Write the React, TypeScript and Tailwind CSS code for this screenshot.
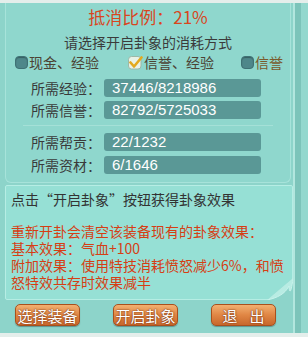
import React from "react";

const font = { fontFamily: '"Noto Sans CJK SC", "Noto Sans", sans-serif' };

function Radio() {
  return <span className="inline-block w-[13px] h-[13px] rounded-[4px] bg-[#4e878a] border border-[#3f7275] shadow-[inset_0_1px_1px_rgba(0,0,0,0.3)]" />;
}

function Checked() {
  return (
    <svg width="15" height="15" viewBox="0 0 15 15">
      <rect x="0.5" y="1.5" width="12.5" height="12.5" rx="3" fill="#e9f2e6" stroke="#9db8a8" />
      <path d="M2.5 7.5 L6 11.5 L13.5 2.5" fill="none" stroke="#e3a91e" strokeWidth="2.6" strokeLinecap="round" strokeLinejoin="round" />
    </svg>
  );
}

function Row({ label, value }: { label: string; value: string }) {
  return (
    <div className="flex items-center h-[18px]">
      <div className="w-[95px] text-right text-[14px] text-[#3a3a3a] leading-[18px]">{label}</div>
      <div className="ml-[3px] w-[157px] h-[18px] rounded-[3px] bg-[#5a9896] text-white text-[15px] leading-[18px] pl-[8px]" style={{ fontFamily: '"Liberation Sans", Arial, sans-serif' }}>
        {value}
      </div>
    </div>
  );
}

function Btn({ children }: { children: React.ReactNode }) {
  return (
    <div className="w-[65px] h-[22px] rounded-[5px] border border-[#a9501d] bg-gradient-to-b from-[#f2b070] via-[#e08644] to-[#c8682c] flex items-center justify-center gap-[12px] text-white text-[15px] leading-none [text-shadow:0_0_2px_#7a3410,0_0_1px_#7a3410] shadow-[0_1px_1px_rgba(0,0,0,0.3)]">
      {children}
    </div>
  );
}

export default function App() {
  return (
    <div className="w-[308px] h-[337px] bg-[#e4eeeb] pt-[3px] pb-[4px]" style={font}>
      <div className="flex h-[330px] bg-[#8dd4ca]">
        <div className="w-[293px] pl-[5px] flex flex-col">
          {/* Top panel */}
          <div className="w-[286px] h-[180px] bg-[#8fd7cd] border-x border-b border-[#a7e3da] rounded-b-[6px] flex flex-col items-center">
            <div className="mt-[3px] h-[22px] text-[17px] leading-[22px] text-[#d9461d]">抵消比例：21%</div>
            <div className="mt-[5px] h-[18px] text-[14px] leading-[18px] text-[#3b3b3b]">请选择开启卦象的消耗方式</div>
            <div className="mt-[2px] h-[18px] w-full flex items-center text-[14px] leading-[18px] text-[#4c4334]">
              <div className="ml-[9px] flex items-center gap-[1px]"><Radio /><span>现金、经验</span></div>
              <div className="ml-[29px] flex items-center gap-[1px]"><Checked /><span>信誉、经验</span></div>
              <div className="ml-[27px] flex items-center gap-[1px]"><Radio /><span className="text-[#7a5a2c]">信誉</span></div>
            </div>
            <div className="mt-[8px] w-full flex flex-col gap-[4px]">
              <Row label="所需经验：" value="37446/8218986" />
              <Row label="所需信誉：" value="82792/5725033" />
            </div>
            <div className="mt-[6px] w-[250px] h-px bg-[#a5e0d7]" />
            <div className="mt-[7px] w-full flex flex-col gap-[5px]">
              <Row label="所需帮贡：" value="22/1232" />
              <Row label="所需资材：" value="6/1646" />
            </div>
          </div>
          {/* Text box */}
          <div className="relative mt-[2px] w-[288px] h-[115px] bg-[#96e0d5] border border-[#b6ede4] rounded-[2px] px-[5px] pt-[5px]">
            <div className="text-[14px] leading-[17px] text-[#333333]">点击“开启卦象”按钮获得卦象效果</div>
            <div className="mt-[15px] text-[14px] leading-[17px] text-[#d63e14]">
              <div>重新开卦会清空该装备现有的卦象效果：</div>
              <div>基本效果：气血+100</div>
              <div>附加效果：使用特技消耗愤怒减少6%，和愤怒特效共存时效果减半</div>
            </div>
            <svg className="absolute right-[-1px] bottom-[-1px]" width="26" height="22" viewBox="0 0 26 22">
              <path d="M0 22 L26 0 L26 22 Z" fill="#8dd4ca" />
              <path d="M0 22 C10 20 18 16 22 8 C22 14 24 18 26 0" fill="#b8ece3" stroke="#c9f3ec" strokeWidth="1" />
            </svg>
          </div>
          {/* Buttons */}
          <div className="mt-[4px] flex pl-[10px] gap-[33px]">
            <Btn>选择装备</Btn>
            <Btn>开启卦象</Btn>
            <Btn><span>退</span><span>出</span></Btn>
          </div>
        </div>
        <div className="flex">
          <div className="w-[2px] bg-[#b2e6de]" />
          <div className="w-[6px] bg-[#7cc4ba]" />
          <div className="w-[7px] bg-[#93d8ce]" />
        </div>
      </div>
    </div>
  );
}
